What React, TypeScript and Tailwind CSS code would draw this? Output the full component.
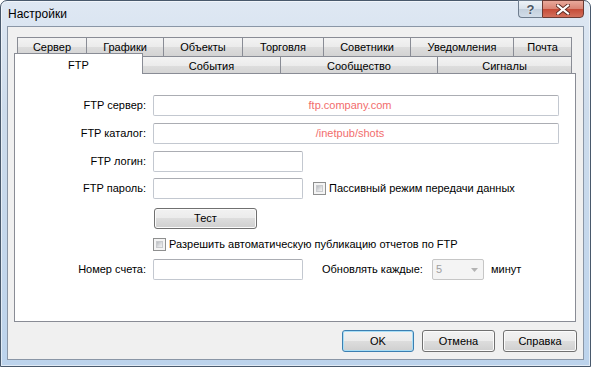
import React from "react";

const btn =
  "flex items-center justify-center rounded-[3px] border text-[11px] text-black bg-[linear-gradient(to_bottom,#f2f2f2_0%,#ebebeb_50%,#dddddd_50%,#cfcfcf_100%)]";

const Checkbox = () => (
  <div className="w-[13px] h-[13px] border border-[#8e8f8f] bg-[#f4f4f4] p-[2px] shrink-0">
    <div className="w-full h-full bg-[linear-gradient(135deg,#b9bcc0_0%,#dfe0e2_60%,#f3f3f3_100%)] border border-[#c9cbce]" />
  </div>
);

const Field = ({ className = "", value }: { className?: string; value?: string }) => (
  <div
    className={
      "h-[21px] border border-[#c3c8d0] border-t-[#abadb3] rounded-[2px] bg-white flex items-center justify-center text-[11px] text-[#f26d6d] " +
      className
    }
  >
    {value && <span className="-ml-[12px]">{value}</span>}
  </div>
);

const Label = ({ text }: { text: string }) => (
  <div className="w-[131px] mr-[7px] text-right text-[11px] text-black">{text}</div>
);

const tabUp =
  "h-[19px] flex items-center justify-center text-[11px] text-black border-t border-l border-[#898c95] bg-[linear-gradient(to_bottom,#f3f3f3_0%,#ebebeb_50%,#dddddd_50%,#d3d3d3_100%)]";

const App = () => {
  return (
    <div className="w-[591px] h-[367px] font-['Liberation_Sans',Arial,sans-serif]">
      <div className="w-full h-full flex flex-col border border-[#49596c] rounded-t-[7px] bg-[linear-gradient(to_bottom,#dfe8f3_0%,#cddcec_30%,#bcd3ec_100%)] shadow-[inset_0_0_0_1px_rgba(255,255,255,0.55)]">
        {/* title bar */}
        <div className="h-[25px] flex items-start shrink-0">
          <div className="pl-[7px] pt-[6px] text-[12px] leading-[14px] text-black">Настройки</div>
          <div className="ml-auto mr-[6px] -mt-px flex">
            <div className="w-[24px] h-[18px] rounded-bl-[4px] border border-[#6f7d8e] border-r-0 bg-[linear-gradient(to_bottom,#eef3f8_0%,#d9e2ec_50%,#c3cfdc_50%,#d2dde9_100%)] flex items-center justify-center">
              <span className="text-[13px] font-bold leading-none text-[#4a5564] [text-shadow:0_0_2px_#ffffff]">?</span>
            </div>
            <div className="w-[42px] h-[18px] rounded-br-[4px] border border-[#6b3a33] bg-[linear-gradient(to_bottom,#e9a99b_0%,#d98373_50%,#c54a36_50%,#d3705c_100%)] flex items-center justify-center">
              <svg width="14" height="11" viewBox="0 0 14 11">
                <path d="M2 1.5 L12 9.5 M12 1.5 L2 9.5" stroke="#5b2a22" strokeWidth="4" strokeLinecap="square" />
                <path d="M2 1.5 L12 9.5 M12 1.5 L2 9.5" stroke="#ffffff" strokeWidth="2.2" strokeLinecap="square" />
              </svg>
            </div>
          </div>
        </div>

        {/* client */}
        <div className="flex-1 px-[6px] pb-[6px] flex">
          <div className="flex-1 border border-[#8a96a6] bg-[#f0f0f0] flex flex-col pt-[10px] pl-[6px]">
            {/* tabs row 1 */}
            <div className="flex ml-[3px]">
              <div className={tabUp + " w-[69px]"}>Сервер</div>
              <div className={tabUp + " w-[77px]"}>Графики</div>
              <div className={tabUp + " w-[79px]"}>Объекты</div>
              <div className={tabUp + " w-[81px]"}>Торговля</div>
              <div className={tabUp + " w-[87px]"}>Советники</div>
              <div className={tabUp + " w-[103px]"}>Уведомления</div>
              <div className={tabUp + " w-[59px] border-r"}>Почта</div>
            </div>
            {/* tabs row 2 */}
            <div className="flex items-start h-[17px]">
              <div className="relative z-10 w-[129px] h-[21px] -mt-[3px] bg-white border border-b-0 border-[#898c95] flex items-start justify-center pt-[3px] text-[11px] text-black">
                FTP
              </div>
              <div className={tabUp + " h-[17px] w-[137px] border-l-0"}>События</div>
              <div className={tabUp + " h-[17px] w-[157px]"}>Сообщество</div>
              <div className={tabUp + " h-[17px] w-[135px] border-r"}>Сигналы</div>
            </div>

            {/* panel */}
            <div className="w-[562px] h-[249px] bg-white border border-[#898c95] flex flex-col">
              <div className="flex items-center mt-[21px]">
                <Label text="FTP сервер:" />
                <Field className="w-[406px]" value="ftp.company.com" />
              </div>
              <div className="flex items-center mt-[7px]">
                <Label text="FTP каталог:" />
                <Field className="w-[406px] border-[#b7c4d3] border-t-[#7f9db9]" value="/inetpub/shots" />
              </div>
              <div className="flex items-center mt-[7px]">
                <Label text="FTP логин:" />
                <Field className="w-[150px]" />
              </div>
              <div className="flex items-center mt-[6px]">
                <Label text="FTP пароль:" />
                <Field className="w-[150px]" />
                <div className="ml-[10px]">
                  <Checkbox />
                </div>
                <span className="ml-[3px] text-[11px] text-black">Пассивный режим передачи данных</span>
              </div>
              <div className="flex mt-[9px] ml-[139px]">
                <div className={btn + " w-[103px] h-[21px] border-[#707070] shadow-[inset_0_0_0_1px_#fbfbfb]"}>Тест</div>
              </div>
              <div className="flex items-center h-[21px] mt-[5px] ml-[138px]">
                <Checkbox />
                <span className="ml-[3px] text-[11px] text-black">Разрешить автоматическую публикацию отчетов по FTP</span>
              </div>
              <div className="flex items-center mt-[4px]">
                <Label text="Номер счета:" />
                <Field className="w-[150px]" />
                <span className="ml-[19px] w-[110px] text-[11px] text-black">Обновлять каждые:</span>
                <div className="w-[52px] h-[21px] border border-[#c6c6c6] rounded-[2px] bg-[#f4f4f4] flex items-center pl-[3px] pr-[5px] text-[11px] text-[#a0a0a0]">
                  <span>5</span>
                  <svg className="ml-auto" width="7" height="4" viewBox="0 0 7 4">
                    <path d="M0 0 H7 L3.5 4 Z" fill="#b3b3b3" />
                  </svg>
                </div>
                <span className="ml-[7px] text-[11px] text-black">минут</span>
              </div>
            </div>

            {/* buttons */}
            <div className="flex justify-end gap-[8px] pr-[6px] mt-[8px]">
              <div className={btn + " w-[72px] h-[22px] border-[#3c7fb1] shadow-[inset_0_0_0_1px_#a8def6]"}>OK</div>
              <div className={btn + " w-[73px] h-[22px] border-[#707070] shadow-[inset_0_0_0_1px_#fbfbfb]"}>Отмена</div>
              <div className={btn + " w-[74px] h-[22px] border-[#707070] shadow-[inset_0_0_0_1px_#fbfbfb]"}>Справка</div>
            </div>
          </div>
        </div>
      </div>
    </div>
  );
};

export default App;
